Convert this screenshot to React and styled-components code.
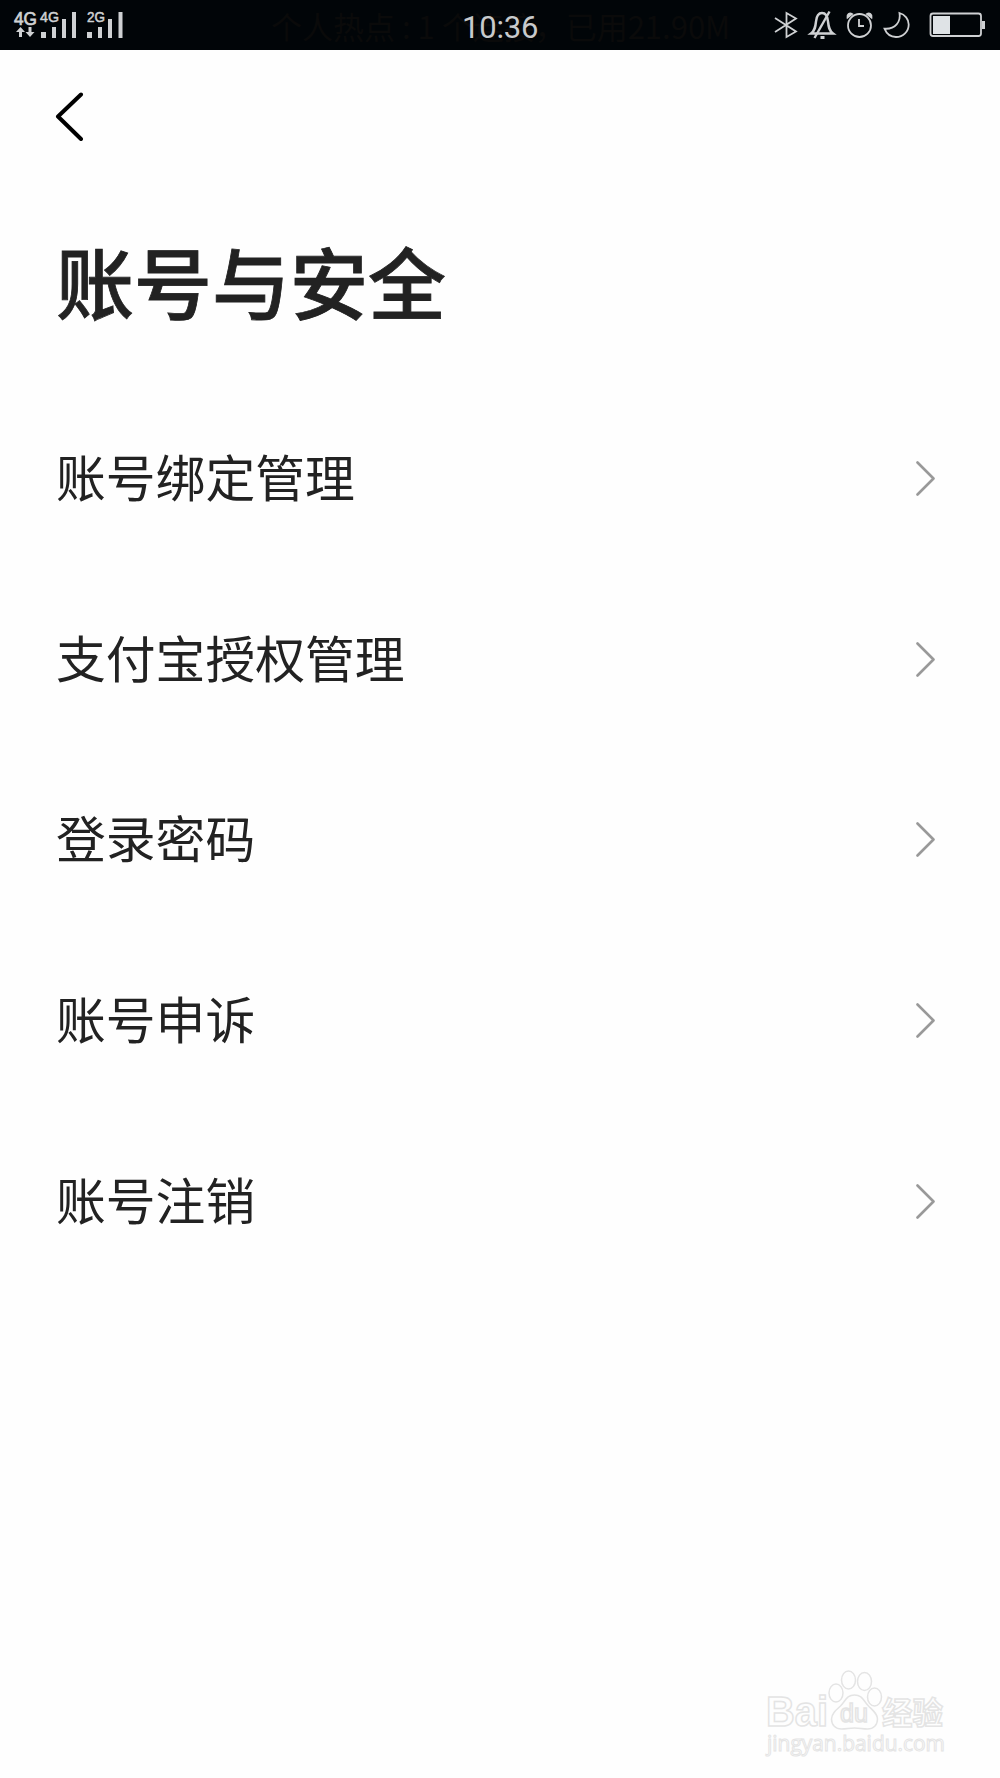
import React from 'react'
import styled, { createGlobalStyle } from 'styled-components'

const GlobalStyle = createGlobalStyle`
    * {
        box-sizing: border-box;
    }

    body {
        margin: 0;
        background: #fefefe;
        color: #222;
        font-family: "Noto Sans CJK SC", sans-serif;
    }
`

const Page = styled.div`
    height: 1778px;
    display: flex;
    flex-direction: column;
    overflow: hidden;
`

const StatusBar = styled.header`
    position: relative;
    height: 50px;
    flex: none;
    display: flex;
    justify-content: space-between;
    background: #010508;
`

const Ticker = styled.span`
    position: absolute;
    left: 271px;
    top: 3px;
    font-size: 31px;
    line-height: 46px;
    white-space: pre;
    color: #0a0a0a;
`

const Clock = styled.time`
    position: absolute;
    left: 462px;
    top: 7px;
    font-family: Roboto, sans-serif;
    font-size: 31px;
    line-height: 42px;
    letter-spacing: -0.2px;
    color: #c8cacc;
`

const Header = styled.nav`
    height: 134px;
    padding: 41px 0 0 53px;
`

const BackButton = styled.button`
    display: block;
    padding: 0;
    border: 0;
    background: none;
`

const Title = styled.h1`
    height: 204px;
    margin: 0;
    padding-left: 56px;
    font-size: 78px;
    font-weight: 500;
    line-height: 192px;
    -webkit-text-stroke: 0.8px #222;
`

const List = styled.ul`
    margin: 0;
    padding: 0 62px 0 56px;
    list-style: none;
`

const Row = styled.li`
    height: 180.6px;
    display: flex;
    align-items: center;
    justify-content: space-between;
`

const Label = styled.span`
    padding-bottom: 6px;
    font-size: 49.8px;
    line-height: 72px;
`

const Watermark = styled.footer`
    margin: auto 47px 18px auto;

    text {
        font-family: "Liberation Sans", "Noto Sans CJK SC", sans-serif;
    }

    .url {
        font-family: "Open Sans", sans-serif;
        stroke-width: 1;
    }
`

const items = ['账号绑定管理', '支付宝授权管理', '登录密码', '账号申诉', '账号注销']

const SignalIcons = () => (
    <svg width="140" height="50" fill="#cfd1d3" fontFamily="Liberation Sans, sans-serif">
        <text x="14" y="25" fontSize="17.500" stroke="#cfd1d3" strokeWidth=".7" textLength="23" lengthAdjust="spacingAndGlyphs">4G</text>
        <text x="40" y="22" fontSize="14" stroke="#cfd1d3" strokeWidth=".5" textLength="19" lengthAdjust="spacingAndGlyphs">4G</text>
        <text x="87" y="22" fontSize="14" stroke="#cfd1d3" strokeWidth=".5" textLength="18" lengthAdjust="spacingAndGlyphs">2G</text>
        <path d="M20.500 27l4.500 5h-3v5h-3v-5h-3zM30 37l-4.500-5h3v-5h3v5h3z" />
        <path d="M41 32h5v6h-5zM52 27h4v11h-4zM62 19h4v19h-4zM72 12h4v26h-4z" />
        <path d="M87 32h5v6h-5zM98 27h4v11h-4zM108 19h4v19h-4zM118.500 12h4v26h-4z" />
    </svg>
)

const SystemIcons = () => (
    <svg width="240" height="50" fill="none" stroke="#cfd1d3" strokeWidth="1.8">
        <path d="M15 18l21 13.500-9.500 5.500V13l9.500 5.500L15 32" />
        <path d="M51 33.500c4-3 4.500-7 5-12 .6-6 3-8.500 6-8.500s5.500 2.500 6 8.500c.5 5 1 9 5 12z" strokeWidth="2.500" />
        <path d="M69.500 11.500L54.500 38" strokeWidth="2.400" />
        <path d="M60.500 37.500h4" strokeWidth="3" />
        <circle cx="99.500" cy="25.500" r="11.500" />
        <path d="M99 19v7h5" />
        <path d="M87.500 17.500c-.5-3 2-5 4.500-3.500zM111.500 17.500c.5-3-2-5-4.500-3.500z" fill="#cfd1d3" />
        <path d="M139.500 13c1.500 8.500-4 16.500-15 15.700 2 5 6 8.300 11.500 8.300 7.200 0 12.700-5.500 12.700-12.500 0-5.300-3.700-10-9.200-11.500z" />
        <rect x="170.500" y="13.500" width="50.500" height="22.500" rx="2.500" />
        <path d="M173 16h17v18h-17z" fill="#dfe3e6" stroke="none" />
        <path d="M222 21h3v8h-3z" fill="#cfd1d3" stroke="none" />
    </svg>
)

const BaiduMark = () => (
    <svg width="204" height="96" fill="#fefefe" stroke="#e4e4e4" strokeWidth="1.500" display="block">
        <text x="17" y="62" fontSize="42" fontWeight="bold" textLength="62" lengthAdjust="spacingAndGlyphs">Bai</text>
        <ellipse cx="87" cy="29" rx="7" ry="9" />
        <ellipse cx="99.500" cy="16" rx="7" ry="9" />
        <ellipse cx="115.500" cy="17.500" rx="7" ry="9" />
        <ellipse cx="125.500" cy="33" rx="7" ry="9" />
        <path d="M105.500 31c-8 0-9 6-14 11-5 4.500-9 8-9 13 0 6 4 10 10 10 5 0 8-1 13-1s8 1 13 1c6 0 10-4 10-10 0-5-4-8-9-13-5-5-6-11-14-11z" />
        <text x="91" y="58" fontSize="25" textLength="28" lengthAdjust="spacingAndGlyphs">du</text>
        <text x="133" y="60" fontSize="31" fontWeight="bold" textLength="61" lengthAdjust="spacingAndGlyphs">经验</text>
        <text className="url" x="18" y="87" fontSize="21" textLength="178" lengthAdjust="spacingAndGlyphs">jingyan.baidu.com</text>
    </svg>
)

const Chevron = () => (
    <svg width="22" height="38" fill="none" stroke="#999" strokeWidth="2.600" strokeLinecap="round" strokeLinejoin="round">
        <path d="M1.500 3.500l16 16-16 16" />
    </svg>
)

export const App = () => {

    return (
        <>
            <GlobalStyle />
            <Page>
                <StatusBar>
                    <Ticker>个人热点 : 1 个连接，已用21.90M</Ticker>
                    <SignalIcons />
                    <Clock>10:36</Clock>
                    <SystemIcons />
                </StatusBar>
                <Header>
                    <BackButton aria-label="返回">
                        <svg width="32" height="50" fill="none" stroke="#000" strokeWidth="4" strokeLinecap="round" strokeLinejoin="round" display="block">
                            <path d="M28 3.500L5 25.500 28 48" />
                        </svg>
                    </BackButton>
                </Header>
                <Title>账号与安全</Title>
                <List>
                    {items.map((item, i) => (
                        <Row key={i}>
                            <Label>{item}</Label>
                            <Chevron />
                        </Row>
                    ))}
                </List>
                <Watermark>
                    <BaiduMark />
                </Watermark>
            </Page>
        </>
    )
}

export default App
